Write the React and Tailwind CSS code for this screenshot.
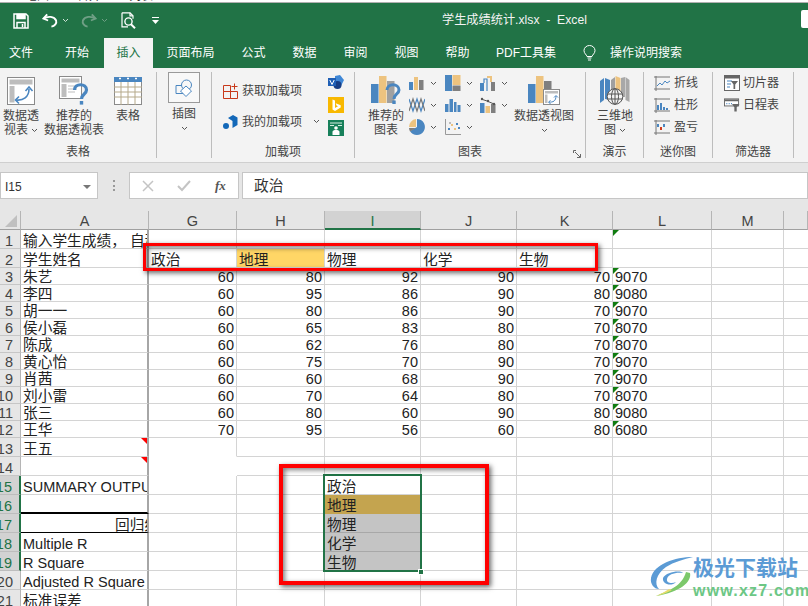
import React from "react";

const BLUE = "#4a86c0";
const TAN = "#edc37f";
const GRAY = "#7f7f7f";

function Caret({ className = "" }) {
  return (
    <svg width="7" height="5" viewBox="0 0 7 5" className={className}>
      <path d="M1 1l2.5 2.5L6 1" fill="none" stroke="#555" strokeWidth="1" />
    </svg>
  );
}

function SaveIcon() {
  return (
    <svg width="16" height="16" viewBox="0 0 16 16" fill="none" stroke="#fff" strokeWidth="1.5">
      <path d="M1 1h12l2 2v12H1z" />
      <path d="M4 1.5h8v4H4z" fill="#fff" />
      <path d="M4 15V9.5h8V15" />
      <path d="M9.5 11v3" />
    </svg>
  );
}

function UndoIcon() {
  return (
    <svg width="16" height="15" viewBox="0 0 17 15" fill="none" stroke="#fff" strokeWidth="2">
      <path d="M5.5 1L1.5 5.5l5 2" />
      <path d="M2 5.5C6 2.5 13 3 15 7.5 16 10.5 13.5 13.5 10 14" />
    </svg>
  );
}

function RedoIcon() {
  return (
    <svg width="16" height="15" viewBox="0 0 17 15" fill="none" stroke="#6f9f85" strokeWidth="2">
      <path d="M11.5 1l4 4.5-5 2" />
      <path d="M15 5.5C11 2.5 4 3 2 7.5 1 10.5 3.5 13.5 7 14" />
    </svg>
  );
}

function PreviewIcon() {
  return (
    <svg width="16" height="17" viewBox="0 0 16 17" fill="none" stroke="#fff" strokeWidth="1.2">
      <path d="M1 .8h8l3 3v3M1 .8v14h6" />
      <path d="M9 .8v3h3" />
      <circle cx="7.5" cy="9.5" r="3.6" strokeWidth="1.4" />
      <path d="M10 12.2l4 4" strokeWidth="2" />
    </svg>
  );
}

function PivotIcon() {
  return (
    <svg width="28" height="28" viewBox="0 0 28 28">
      <rect x=".5" y=".5" width="27" height="27" fill="#fff" stroke="#8a8a8a" />
      <rect x="2.5" y="2.5" width="23" height="5" fill="#bdbdbd" />
      <rect x="2.5" y="9" width="5" height="16.5" fill="#bdbdbd" />
      <path d="M9 23c7 1 13-3 13-11" fill="none" stroke={BLUE} strokeWidth="1.6" />
      <path d="M18.5 14l3.5-4 3.5 4M12 19.5L8.5 23l3.5 3.5" fill="none" stroke={BLUE} strokeWidth="1.6" />
    </svg>
  );
}

function RecommendPivotIcon() {
  return (
    <svg width="30" height="29" viewBox="0 0 30 29">
      <rect x=".5" y=".5" width="22" height="22" fill="#fff" stroke="#8a8a8a" />
      <rect x="2.5" y="2.5" width="18" height="4" fill="#bdbdbd" />
      <rect x="2.5" y="8" width="5" height="13" fill="#bdbdbd" />
      <path d="M9 10h10M9 13h9M9 16h7" stroke="#bdbdbd" strokeWidth="1.2" />
      <path d="M15.5 14c0-7 12-7 12 0 0 4-5 4-5 9" fill="none" stroke={BLUE} strokeWidth="3.2" />
      <rect x="20.8" y="25" width="3.4" height="3.6" fill={BLUE} />
    </svg>
  );
}

function TableIcon() {
  return (
    <svg width="28" height="28" viewBox="0 0 28 28">
      <rect x=".5" y=".5" width="27" height="27" fill="#fff" stroke="#8a8a8a" />
      <rect width="28" height="5" fill={BLUE} />
      <path d="M5 1.5h2M13 1.5h2M21 1.5h2" stroke="#fff" strokeWidth="1.5" />
      <path d="M0 10h28M0 15h28M0 20h28M7 5v23M14 5v23M21 5v23" stroke="#b5a98a" strokeWidth="1" />
    </svg>
  );
}

function IllustrationIcon() {
  return (
    <svg width="18" height="18" viewBox="0 0 18 18" fill="none" stroke={BLUE} strokeWidth="1">
      <path d="M1 6.5h7.5v8H1z" fill="#f8f8f8" />
      <circle cx="11.5" cy="6" r="5" fill="#f8f8f8" />
      <path d="M11 7l5.5 5L11 17.5 5.5 12z" fill="#fff" />
    </svg>
  );
}

function AddinIcon() {
  return (
    <svg width="16" height="16" viewBox="0 0 16 16" fill="none" stroke="#c8391a" strokeWidth="1">
      <path d="M.5 2.5h7v6h-7zM.5 8.5h7v7h-7zM7.5 8.5h7v7h-7z" />
      <path d="M11.5 .5v6M8.5 3.5h6" />
    </svg>
  );
}

function MyAddinIcon() {
  return (
    <svg width="15" height="15" viewBox="0 0 15 15" fill="#1368b8">
      <path d="M5 3l5-3 4.5 2.5V10l-5 3V6z" />
      <circle cx="3" cy="11" r="3" />
    </svg>
  );
}

function VisioIcon() {
  return (
    <svg width="16" height="15" viewBox="0 0 16 15">
      <path d="M7 1l5-1 4 5-3 6-6-2z" fill="#3f87d6" />
      <circle cx="9.5" cy="10" r="4" fill="#173e85" />
      <rect y="3" width="8" height="8" fill="#1f5fb5" />
      <path d="M1.8 5L4 9.5 6.2 5" fill="none" stroke="#fff" strokeWidth="1" />
    </svg>
  );
}

function BingIcon() {
  return (
    <svg width="16" height="16" viewBox="0 0 16 16">
      <rect width="16" height="16" fill="#f8b800" />
      <path d="M4.5 2.5l2.5 1V11l3-1.7-1.5-.8-.8-2.3 5 2v2.3L7 14l-2.5-1.5z" fill="#fff" />
    </svg>
  );
}

function PeopleIcon() {
  return (
    <svg width="16" height="16" viewBox="0 0 16 16">
      <rect width="16" height="16" fill="#17805a" />
      <path d="M2 3h12M2 5.5h4M10 5.5h4" stroke="#d7eee3" strokeWidth="1" />
      <circle cx="8" cy="8" r="1.8" fill="#fff" />
      <path d="M4.5 15v-3c0-1.5 1.5-2 3.5-2s3.5.5 3.5 2v3z" fill="#fff" />
    </svg>
  );
}

function RecommendChartIcon() {
  return (
    <svg width="30" height="29" viewBox="0 0 30 29">
      <rect x="0" y="8" width="7.5" height="19" fill={BLUE} />
      <rect x="8" y="0" width="7.5" height="27" fill={TAN} />
      <rect x="16" y="5" width="7.5" height="22" fill="#a0a0a0" />
      <path d="M16 14c0-7 12-7 12 0 0 4-5 4-5 9" fill="none" stroke={BLUE} strokeWidth="3" />
      <rect x="21.3" y="24.5" width="3.4" height="3.5" fill={BLUE} />
    </svg>
  );
}

function ChartColumn() {
  return (
    <svg width="16" height="16" viewBox="0 0 16 16">
      <rect x="0" y="7" width="4" height="8" fill={BLUE} />
      <rect x="5" y="2" width="4" height="13" fill={TAN} />
      <rect x="10" y="5" width="4.5" height="10" fill={GRAY} />
    </svg>
  );
}

function ChartTree() {
  return (
    <svg width="16" height="16" viewBox="0 0 16 16">
      <rect x="0" y="0" width="7" height="16" fill={BLUE} />
      <rect x="7.5" y="0" width="8" height="10" fill={TAN} />
      <rect x="7.5" y="10.5" width="8" height="5.5" fill={GRAY} />
    </svg>
  );
}

function ChartStep() {
  return (
    <svg width="16" height="16" viewBox="0 0 16 16">
      <path d="M0 16V8h4v8z" fill={BLUE} />
      <path d="M4 8V4h3v12" fill="none" stroke={BLUE} strokeWidth="1.2" />
      <path d="M7 2h4v5" fill="none" stroke={TAN} strokeWidth="2" />
      <rect x="11" y="7" width="4" height="9" fill={GRAY} />
    </svg>
  );
}

function ChartLine() {
  return (
    <svg width="16" height="16" viewBox="0 0 16 16" fill="none" strokeWidth="1.2">
      <path d="M0 2l4 12 4-12 4 12 4-12" stroke={BLUE} />
      <path d="M0 14L4 2l4 12 4-12 4 12" stroke="#777" />
    </svg>
  );
}

function ChartBars() {
  return (
    <svg width="16" height="16" viewBox="0 0 16 16" fill={BLUE}>
      <rect x="0" y="7" width="3.5" height="8" />
      <rect x="4.5" y="2" width="3.5" height="13" />
      <rect x="9" y="5" width="2.5" height="10" />
      <rect x="12.5" y="8" width="3" height="7" />
    </svg>
  );
}

function ChartCombo() {
  return (
    <svg width="16" height="16" viewBox="0 0 16 16">
      <rect x="0" y="6" width="4.5" height="10" fill={BLUE} />
      <rect x="5.5" y="9" width="4.5" height="7" fill={TAN} />
      <rect x="11" y="7" width="4.5" height="9" fill={GRAY} />
      <path d="M1 2l6 2 7 3" fill="none" stroke="#555" strokeWidth="1" />
      <circle cx="2" cy="2" r="1.2" fill="#555" />
      <circle cx="8" cy="4" r="1.2" fill="#555" />
      <circle cx="14" cy="7" r="1.2" fill="#555" />
    </svg>
  );
}

function ChartPie() {
  return (
    <svg width="16" height="16" viewBox="0 0 16 16">
      <path d="M8 0a8 8 0 1 1-7 12l7-4z" fill={BLUE} />
      <path d="M7 0a8 8 0 0 0-7 8h7z" fill={TAN} />
      <path d="M0 9h7l-6 3.5A8 8 0 0 1 0 9z" fill={GRAY} />
    </svg>
  );
}

function ChartScatter() {
  return (
    <svg width="16" height="16" viewBox="0 0 16 16">
      <path d="M.5 0v15.5H16" fill="none" stroke="#999" strokeWidth="1" />
      <rect x="3" y="9" width="2" height="2" fill={BLUE} />
      <rect x="6" y="5" width="2" height="2" fill={TAN} />
      <rect x="9" y="9" width="2" height="2" fill={TAN} />
      <rect x="11" y="4" width="2" height="2" fill={BLUE} />
      <rect x="13" y="8" width="2" height="2" fill={BLUE} />
      <rect x="4" y="3" width="2" height="2" fill="#bbb" />
    </svg>
  );
}

function PivotChartIcon() {
  return (
    <svg width="33" height="29" viewBox="0 0 33 29">
      <rect x="0" y="8" width="7.5" height="19" fill={BLUE} />
      <rect x="8" y="0" width="7.5" height="27" fill={TAN} />
      <rect x="16" y="5" width="7.5" height="8" fill={GRAY} />
      <rect x="15.5" y="13.5" width="16" height="15" fill="#fff" stroke="#8a8a8a" />
      <rect x="17" y="15" width="13" height="2.5" fill="#bdbdbd" />
      <rect x="17" y="18.5" width="2.5" height="8.5" fill="#bdbdbd" />
      <path d="M21 26c4 .5 7-1 7-6M26 21.5l2-2 2 2M22.5 24.5l-2 1.5 2 2" fill="none" stroke={BLUE} strokeWidth="1" />
    </svg>
  );
}

function MapIcon() {
  return (
    <svg width="30" height="29" viewBox="0 0 30 29">
      <path d="M0 5l4-3v22l-4 3z" fill={BLUE} />
      <path d="M5 2l5 2v20l-5-1z" fill={BLUE} />
      <path d="M11 4l4-3v14h-4z" fill="#a0a0a0" />
      <path d="M15.5 0l5 2v14h-5z" fill={TAN} />
      <path d="M21 2l4-1v20h-4z" fill="#a8a8a8" />
      <path d="M25.5 1l4 3v22l-4-2z" fill="#a8a8a8" />
      <circle cx="15" cy="20.5" r="7.8" fill="#f3f3f3" stroke="#555" strokeWidth="1" />
      <ellipse cx="15" cy="20.5" rx="3.5" ry="7.8" fill="none" stroke="#555" strokeWidth="1" />
      <path d="M7.5 18h15M7.5 23h15M15 13v15" stroke="#555" strokeWidth="1" />
    </svg>
  );
}

function SparkFrame({ children }) {
  return (
    <svg width="16" height="15" viewBox="0 0 16 15">
      <path d="M0 1h16M0 13h16M2 0v15" stroke="#777" strokeWidth="1" fill="none" />
      {children}
    </svg>
  );
}

function SlicerIcon() {
  return (
    <svg width="16" height="16" viewBox="0 0 16 16">
      <rect x=".5" y=".5" width="15" height="15" fill="#fff" stroke="#666" />
      <rect x="1" y="1" width="14" height="2.5" fill="#666" />
      <path d="M3 6h5M3 9h4M3 12h3" stroke={BLUE} strokeWidth="1.2" />
      <path d="M7 6h7l-2.8 3.5V14H9.5V9.5z" fill="#666" />
    </svg>
  );
}

function TimelineIcon() {
  return (
    <svg width="17" height="14" viewBox="0 0 17 14">
      <rect x=".5" y=".5" width="15" height="7.5" fill="#fff" stroke="#666" />
      <rect x="1" y="1" width="14" height="2" fill="#666" />
      <path d="M2.5 5.5h1M5 5.5h1M7.5 5.5h1" stroke={BLUE} strokeWidth="1.4" />
      <path d="M8.5 6h8l-3 3.5V14H11V9.5z" fill="#666" />
    </svg>
  );
}

function BulbIcon() {
  return (
    <svg width="13" height="16" viewBox="0 0 13 16" fill="none" stroke="#fff" strokeWidth="1">
      <path d="M4 11.5C3.5 9.5 1 8.5 1 5.5a5.5 5 0 0 1 11 0c0 3-2.5 4-3 6z" />
      <path d="M4.5 13h4M5 15h3" />
    </svg>
  );
}

function Group({ className, label, children, launcher }) {
  return (
    <div className={`relative flex flex-col h-full shrink-0 ${className}`}>
      <div className="flex flex-1 min-h-0">{children}</div>
      <div className="h-[18px] mb-[1px] text-center text-[12px] leading-[18px] text-[#444]">{label}</div>
      {launcher && (
        <svg width="8" height="8" viewBox="0 0 8 8" className="absolute right-[4px] bottom-[4px]" fill="none" stroke="#666">
          <path d="M.5 3V.5H3M2 2l5 5M7.5 4v3.5H4" />
        </svg>
      )}
    </div>
  );
}

function Sep() {
  return <div className="w-[1px] h-[86px] mt-[4px] bg-[#bdbdbd] shrink-0" />;
}

function BigButton({ className = "", icon, lines, caret }) {
  return (
    <div className={`flex flex-col items-center pt-[8px] shrink-0 text-[12px] leading-[14px] text-[#444] ${className}`}>
      <div className="h-[29px] flex items-center">{icon}</div>
      <div className="mt-[4px] text-center whitespace-nowrap">
        {lines.map((l, i) => (
          <div key={l} className="flex items-center justify-center gap-[3px]">
            {l}
            {caret === "inline" && i === lines.length - 1 && <Caret />}
          </div>
        ))}
        {caret === "below" && (
          <div className="h-[14px] flex items-center justify-center">
            <Caret />
          </div>
        )}
      </div>
    </div>
  );
}

function ChartPick({ icon }) {
  return (
    <div className="flex items-center w-[35.5px] h-[16px]">
      {icon}
      <Caret className="ml-[5px]" />
    </div>
  );
}

function Row({ icon, text }) {
  return (
    <div className="h-[22px] flex items-center text-[12px] text-[#444] whitespace-nowrap">
      <div className="w-[16px] flex justify-center">{icon}</div>
      {text}
    </div>
  );
}

function Ribbon() {
  return (
    <div className="flex h-[94px] bg-[#f3f3f3] shrink-0">
      <Group className="w-[156px]" label="表格">
        <BigButton className="w-[42px]" icon={<PivotIcon />} lines={["数据透", "视表"]} caret="inline" />
        <BigButton className="w-[60px] ml-[2px]" icon={<RecommendPivotIcon />} lines={["推荐的", "数据透视表"]} />
        <BigButton className="w-[38px] ml-[5px]" icon={<TableIcon />} lines={["表格"]} />
      </Group>
      <Sep />
      <Group className="w-[54px]" label="">
        <div className="flex flex-col items-center w-[32px] ml-[11px] pt-[4px] text-[12px] text-[#444]">
          <div className="w-[32px] h-[31px] border border-[#9a9a9a] bg-[#f8f8f8] flex items-center justify-center shrink-0">
            <IllustrationIcon />
          </div>
          <div className="mt-[3px] leading-[16px] whitespace-nowrap">插图</div>
          <Caret className="mt-[4px]" />
        </div>
      </Group>
      <Sep />
      <Group className="w-[142px]" label="加载项">
        <div className="flex flex-col w-[90px] ml-[11px] pt-[13px] text-[12px] text-[#444]">
          <div className="h-[20px] flex items-center gap-[3px] whitespace-nowrap">
            <AddinIcon />
            获取加载项
          </div>
          <div className="h-[20px] mt-[11px] flex items-center gap-[4px] whitespace-nowrap">
            <MyAddinIcon />
            我的加载项
          </div>
        </div>
        <Caret className="mt-[51px]" />
        <div className="flex flex-col items-center ml-[8px] pt-[7px] gap-[7px]">
          <VisioIcon />
          <BingIcon />
          <PeopleIcon />
        </div>
      </Group>
      <Sep />
      <Group className="w-[230px]" label="图表" launcher>
        <BigButton className="w-[40px] ml-[11px]" icon={<RecommendChartIcon />} lines={["推荐的", "图表"]} />
        <div className="grid grid-cols-3 ml-[3px] pt-[7px] h-fit gap-y-[6px] w-[107px]">
          <ChartPick icon={<ChartColumn />} />
          <ChartPick icon={<ChartTree />} />
          <ChartPick icon={<ChartStep />} />
          <ChartPick icon={<ChartLine />} />
          <ChartPick icon={<ChartBars />} />
          <ChartPick icon={<ChartCombo />} />
          <ChartPick icon={<ChartPie />} />
          <ChartPick icon={<ChartScatter />} />
        </div>
        <BigButton className="w-[60px] ml-[-2px]" icon={<PivotChartIcon />} lines={["数据透视图"]} caret="below" />
      </Group>
      <Sep />
      <Group className="w-[57px]" label="演示">
        <BigButton className="w-[46px] ml-[6px]" icon={<MapIcon />} lines={["三维地", "图"]} caret="inline" />
      </Group>
      <Sep />
      <Group className="w-[68px]" label="迷你图">
        <div className="pl-[10px] pt-[4px]">
          <Row
            text={<span className="ml-[4px]">折线</span>}
            icon={
              <SparkFrame>
                <path d="M3 10l3-3 2 2 3-4 2 2 3-2" fill="none" stroke={BLUE} strokeWidth="1" />
              </SparkFrame>
            }
          />
          <Row
            text={<span className="ml-[4px]">柱形</span>}
            icon={
              <SparkFrame>
                <path d="M4 12V7M7 12V5M10 12V9M13 12V10" stroke={BLUE} strokeWidth="2" />
              </SparkFrame>
            }
          />
          <Row
            text={<span className="ml-[4px]">盈亏</span>}
            icon={
              <SparkFrame>
                <path d="M4 4v3M10 4v3" stroke={BLUE} strokeWidth="2" />
                <path d="M7 7v3" stroke="#d13b1c" strokeWidth="2" />
              </SparkFrame>
            }
          />
        </div>
      </Group>
      <Sep />
      <Group className="w-[80px]" label="筛选器">
        <div className="pl-[11px] pt-[4px]">
          <Row icon={<SlicerIcon />} text={<span className="ml-[3px]">切片器</span>} />
          <Row icon={<TimelineIcon />} text={<span className="ml-[3px]">日程表</span>} />
        </div>
      </Group>
      <Sep />
    </div>
  );
}

const tabs = [
  ["文件", "w-[50px] ml-[-4px]"],
  ["开始", "w-[50px] ml-[6px]"],
  ["插入", "w-[49px] ml-[2px] bg-[#f3f3f3] text-[#217346]"],
  ["页面布局", "w-[75px]"],
  ["公式", "w-[51px]"],
  ["数据", "w-[51px]"],
  ["审阅", "w-[51px]"],
  ["视图", "w-[51px]"],
  ["帮助", "w-[51px]"],
  ["PDF工具集", "w-[86px]"],
];

const colClasses = [
  "border-r-[2px] border-r-[#a6a6a6]",
  "border-r border-r-[#d4d4d4]",
  "border-r border-r-[#d4d4d4]",
  "border-r border-r-[#d4d4d4]",
  "border-r border-r-[#d4d4d4]",
  "border-r border-r-[#d4d4d4]",
  "border-r border-r-[#d4d4d4]",
  "border-r border-r-[#d4d4d4]",
  "",
];

const colNames = ["A", "G", "H", "I", "J", "K", "L", "M", ""];

const names = ["朱艺", "李四", "胡一一", "侯小磊", "陈成", "黄心怡", "肖茜", "刘小雷", "张三", "王华"];
const scores = [
  [60, 80, 92, 90, 70, "9070"],
  [60, 95, 86, 90, 80, "9080"],
  [60, 80, 86, 90, 70, "9070"],
  [60, 65, 83, 80, 70, "8070"],
  [60, 62, 76, 80, 70, "8070"],
  [60, 75, 70, 90, 70, "9070"],
  [60, 60, 68, 90, 70, "9070"],
  [60, 70, 64, 80, 70, "8070"],
  [60, 80, 60, 90, 80, "9080"],
  [70, 95, 56, 60, 80, "6080"],
];

const rowHeights = [19, 19, 17, 17, 17, 17, 17, 17, 17, 17, 17, 17, 19, 19, 19, 19, 19, 19, 19, 19, 19];

function GreenMark() {
  return <div className="absolute top-0 left-0 w-0 h-0 border-t-[6px] border-t-[#107c10] border-r-[6px] border-r-transparent" />;
}

function RedMark() {
  return <div className="absolute top-0 right-0 w-0 h-0 border-t-[6px] border-t-[#ff0000] border-l-[6px] border-l-transparent" />;
}

function Cell({ className = "", children }) {
  return (
    <div className={`relative flex items-end overflow-hidden whitespace-nowrap border-b border-b-[#d4d4d4] px-[2px] text-[14.5px] leading-[14px] text-[#222] ${className}`}>
      {children}
    </div>
  );
}

function Cjk({ children, className = "" }) {
  return <span className={`text-[14.7px] ${className}`}>{children}</span>;
}

function cellFor(rowNo, col) {
  // col: 0=A, 1=G, 2=H, 3=I, 4=J, 5=K, 6=L, 7=M, 8=N
  const base = colClasses[col];
  if (rowNo === 1 && col === 0) return <Cell className={base}><Cjk>输入学生成绩， 自动计算总分</Cjk></Cell>;
  if (rowNo === 1 && col === 6) return <Cell className={base}><GreenMark /></Cell>;
  if (rowNo === 2) {
    const heads = ["学生姓名", "政治", "地理", "物理", "化学", "生物"];
    if (col < 6) return <Cell className={`${base} ${col === 2 ? "bg-[#ffd666]" : ""}`}><Cjk>{heads[col]}</Cjk></Cell>;
  }
  if (rowNo >= 3 && rowNo <= 12) {
    const i = rowNo - 3;
    if (col === 0) return <Cell className={base}><Cjk>{names[i]}</Cjk></Cell>;
    if (col >= 1 && col <= 5) return <Cell className={`${base} justify-end`}>{scores[i][col - 1]}</Cell>;
    if (col === 6) return <Cell className={base}><GreenMark />{scores[i][5]}</Cell>;
  }
  if (rowNo === 13 && col === 0) return <Cell className={base}><Cjk>王五</Cjk><RedMark /></Cell>;
  if (rowNo === 14 && col === 0) return <Cell className={base}><RedMark /></Cell>;
  if (rowNo === 15 && col === 0) return <Cell className={base}>SUMMARY OUTPUT</Cell>;
  if (rowNo === 16 && col === 0) return <Cell className={`${base} !border-b-[2px] !border-b-black`} />;
  if (rowNo === 17 && col === 0) return <Cell className={`${base} !border-b-black pl-[94px]`}><Cjk>回归统计</Cjk></Cell>;
  if (rowNo === 18 && col === 0) return <Cell className={base}>Multiple R</Cell>;
  if (rowNo === 19 && col === 0) return <Cell className={base}>R Square</Cell>;
  if (rowNo === 20 && col === 0) return <Cell className={base}>Adjusted R Square</Cell>;
  if (rowNo === 21 && col === 0) return <Cell className={base}><Cjk>标准误差</Cjk></Cell>;
  if (rowNo === 13 && col === 1) return <Cell className={`${base} !border-b-transparent`} />;
  if (rowNo === 14 && col === 1) return <Cell className="!border-b-transparent border-r border-r-transparent" />;
  if (col === 3 && rowNo >= 15 && rowNo <= 19) {
    const picks = {
      15: ["政治", ""],
      16: ["地理", "bg-[#c4a44f] !border-b-[#c4a44f]"],
      17: ["物理", "bg-[#c4c4c4] !border-b-[#a8a8a8]"],
      18: ["化学", "bg-[#c4c4c4] !border-b-[#a8a8a8]"],
      19: ["生物", "bg-[#c4c4c4] !border-b-white"],
    };
    return <Cell className={`${base} ${picks[rowNo][1]}`}><Cjk>{picks[rowNo][0]}</Cjk></Cell>;
  }
  return <Cell className={base} />;
}

function Sheet() {
  return (
    <div className="relative flex-1 overflow-hidden bg-white min-h-0">
      <div className="grid grid-cols-[21px_128px_88px_88px_96px_96px_96px_99px_72px_24px] grid-rows-[19px_19px_19px_repeat(10,17px)_19px_19px_19px_19px_19px_19px_19px_19px_19px_19px]">
        <div className="relative bg-[#e6e6e6] border-r border-r-[#b5b5b5] border-b border-b-[#a0a0a0]">
          <div className="absolute right-[3px] bottom-[2px] w-0 h-0 border-b-[12px] border-b-[#c0c0c0] border-l-[12px] border-l-transparent" />
        </div>
        {colNames.map((c, i) => (
          <div
            key={i}
            className={
              c === "I"
                ? "flex items-center justify-center pt-[3px] bg-[#d2d2d2] border-r border-r-[#b5b5b5] border-b-[2px] border-b-[#217346] text-[14.5px] text-[#217346] leading-none"
                : "flex items-center justify-center pt-[3px] bg-[#e6e6e6] border-r border-r-[#b5b5b5] border-b border-b-[#a0a0a0] text-[14.5px] text-[#444] leading-none"
            }
          >
            {c}
          </div>
        ))}
        {rowHeights.map((_, r) => {
          const rowNo = r + 1;
          const selected = rowNo >= 15 && rowNo <= 19;
          return (
            <React.Fragment key={rowNo}>
              <div
                className={
                  selected
                    ? "flex items-end justify-end overflow-hidden pr-[7px] bg-[#d2d2d2] border-r-[2px] border-r-[#217346] border-b border-b-[#bdbdbd] text-[14.5px] leading-[14px] text-[#217346]"
                    : "flex items-end justify-end overflow-hidden pr-[7px] bg-[#e6e6e6] border-r border-r-[#b5b5b5] border-b border-b-[#c6c6c6] text-[14.5px] leading-[14px] text-[#444]"
                }
              >
                {rowNo}
              </div>
              {colNames.map((_, c) => (
                <React.Fragment key={c}>{cellFor(rowNo, c)}</React.Fragment>
              ))}
            </React.Fragment>
          );
        })}
      </div>

      {/* active selection */}
      <div className="absolute left-[323px] top-[263px] w-[99px] h-[98px] border-[2px] border-[#217346]" />
      <div className="absolute left-[418px] top-[358px] w-[6px] h-[6px] bg-[#217346] border border-white" />

      {/* red callouts */}
      <div className="absolute left-[143px] top-[32px] w-[455px] h-[28px] border-[3px] border-[#ff0000] shadow-[2px_2px_5px_rgba(0,0,0,0.6),inset_2px_2px_5px_rgba(0,0,0,0.5)]" />
      <div className="absolute left-[279px] top-[253px] w-[210px] h-[121px] border-[4px] border-[#ff0000] shadow-[2px_2px_5px_rgba(0,0,0,0.6),inset_2px_2px_5px_rgba(0,0,0,0.5)]" />

      {/* watermark */}
      <div className="absolute left-[650px] top-[345px] flex items-start">
        <svg width="44" height="41" viewBox="0 0 44 41" className="shrink-0 blur-[0.4px]">
          <path d="M43 1C25 1 4 8 1 22c-1 6 3 11 8 11C4 28 6 18 16 11 24 6 34 3 43 1z" fill="#5b9bd5" />
          <path d="M13 22c3-6 17-8 20-5-7-1-15 1-16 6-1 4 5 5 9 3-5 5-14 2-13-4z" fill="#5b9bd5" />
          <path d="M40 17c2 9-10 19-34 23 14-6 26-10 30-24z" fill="#7cc86b" />
          <path d="M22 34c-5 3-11 5-16 6 4-2 9-4 13-7z" fill="#e8dc6a" />
        </svg>
        <div className="ml-[-1px]">
          <div className="text-[21px] leading-[24px] font-bold text-[#5b9bd5] whitespace-nowrap">极光下载站</div>
          <div className="mt-[4px] text-[16px] leading-[14px] tracking-[1.2px] font-bold text-[#6cc785] whitespace-nowrap">www.xz7.com</div>
        </div>
      </div>
    </div>
  );
}

export default function App() {
  return (
    <div className="relative w-[808px] h-[606px] overflow-hidden flex flex-col bg-white font-['Liberation_Sans','Noto_Sans_CJK_SC',sans-serif]">
      <div className="h-[3px] shrink-0 bg-white border-b border-b-[#b0b0b0] overflow-hidden flex text-[12px] leading-[12px] text-[#333]">
        <span className="ml-[25px] mt-[-10px]">地图</span>
        <span className="ml-[28px] mt-[-10px]">合并</span>
        <span className="ml-[28px] mt-[-10px]">列表</span>
      </div>

      <div className="h-[35px] shrink-0 bg-[#217346] flex items-center relative">
        <div className="ml-[13px]"><SaveIcon /></div>
        <div className="ml-[13px]"><UndoIcon /></div>
        <Caret className="ml-[4px] [&>path]:stroke-[#cfe3d8]" />
        <div className="ml-[12px]"><RedoIcon /></div>
        <Caret className="ml-[4px] [&>path]:stroke-[#6f9f85]" />
        <div className="ml-[13px]"><PreviewIcon /></div>
        <svg width="7" height="7" viewBox="0 0 7 7" className="ml-[15px]" fill="#fff">
          <path d="M0 0h7v1H0zM0 3h7L3.5 7z" />
        </svg>
        <div className="ml-[283px] text-[12.2px] text-[#f4f4f4] whitespace-pre">学生成绩统计.xlsx  -  Excel</div>
        <div className="absolute right-0 top-[7px] w-[7px] h-[18px] bg-white rounded-l-[2px]" />
      </div>

      <div className="h-[30px] shrink-0 bg-[#217346] flex items-stretch text-[12px] text-white">
        {tabs.map(([t, c]) => (
          <div key={t} className={`flex items-center justify-center shrink-0 whitespace-nowrap ${c}`}>{t}</div>
        ))}
        <div className="flex items-center ml-[14px]"><BulbIcon /></div>
        <div className="flex items-center ml-[14px] whitespace-nowrap">操作说明搜索</div>
      </div>

      <Ribbon />

      <div className="h-[49px] shrink-0 bg-[#e6e6e6] border-t border-t-[#cfcfcf] flex items-start pt-[9px]">
        <div className="w-[98px] h-[27px] bg-white border border-[#c6c6c6] flex items-center justify-between pl-[4px] pr-[6px] pt-[2px] text-[12px] text-[#333]">
          I15
          <div className="w-0 h-0 border-t-[4px] border-t-[#777] border-x-[4px] border-x-transparent" />
        </div>
        <div className="w-[2px] h-[11px] ml-[15px] mt-[8px] border-l-[2px] border-dotted border-l-[#999]" />
        <div className="w-[110px] h-[27px] ml-[14px] bg-white border border-[#c6c6c6] flex items-center text-[#bbb]">
          <svg width="12" height="12" viewBox="0 0 12 12" className="ml-[12px]" stroke="#c4c4c4" strokeWidth="1.5">
            <path d="M1 1l10 10M11 1L1 11" />
          </svg>
          <svg width="14" height="12" viewBox="0 0 14 12" className="ml-[23px]" fill="none" stroke="#c4c4c4" strokeWidth="2">
            <path d="M1 6l4 4 8-9" />
          </svg>
          <span className="ml-[24px] font-['Liberation_Serif',serif] italic font-bold text-[13px] text-[#555]">fx</span>
        </div>
        <div className="flex-1 h-[27px] ml-[3px] bg-white border border-[#c6c6c6] flex items-center pl-[11px] pt-[2px] text-[14.7px] text-[#333]">政治</div>
      </div>

      <Sheet />
    </div>
  );
}
